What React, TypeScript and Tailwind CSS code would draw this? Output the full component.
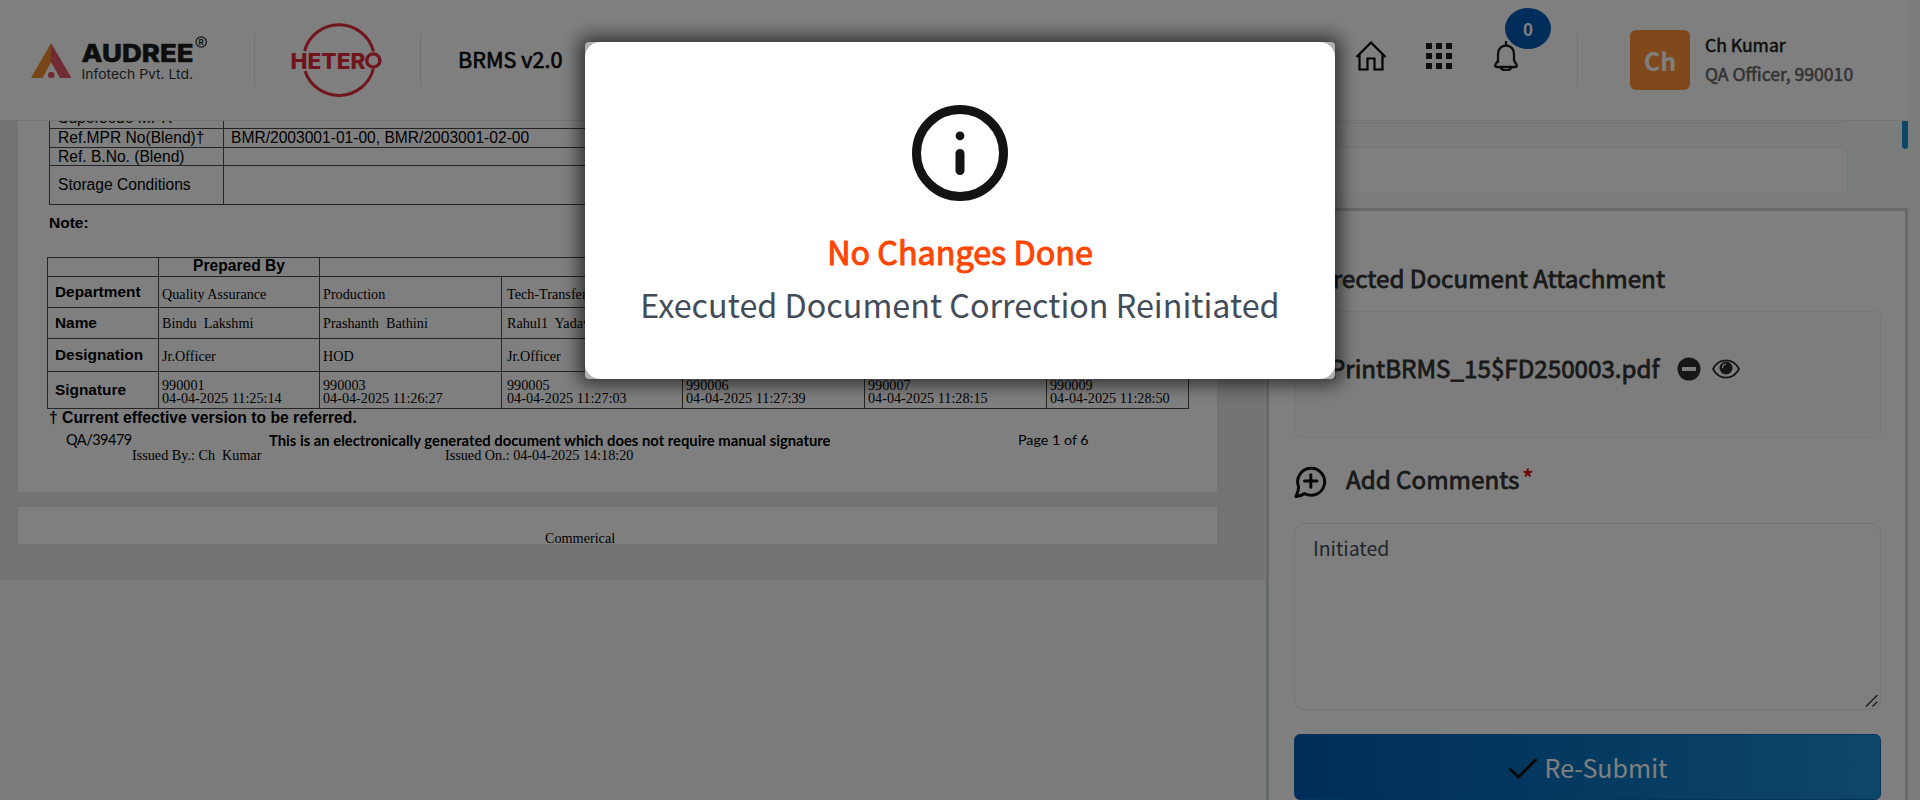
import type { ReactNode } from "react";

const signers = [
  { dept: "Quality Assurance", name: "Bindu\u00a0 Lakshmi", role: "Jr.Officer", id: "990001", at: "04-04-2025 11:25:14" },
  { dept: "Production", name: "Prashanth\u00a0 Bathini", role: "HOD", id: "990003", at: "04-04-2025 11:26:27" },
  { dept: "Tech-Transfer", name: "Rahul1\u00a0 Yadav", role: "Jr.Officer", id: "990005", at: "04-04-2025 11:27:03" },
  { dept: "", name: "", role: "", id: "990006", at: "04-04-2025 11:27:39" },
  { dept: "", name: "", role: "", id: "990007", at: "04-04-2025 11:28:15" },
  { dept: "", name: "", role: "", id: "990009", at: "04-04-2025 11:28:50" },
];

function AudreeLogo() {
  return (
    <svg width="180" height="50" viewBox="0 0 180 50" className="block">
      <path d="M21 7V26.500L12.500 42H1z" fill="#f08c2d" />
      <path d="M21 7L41.500 42H30L21 26z" fill="#e2566a" />
      <rect x="18" y="36" width="6.500" height="6" rx="2.500" fill="#e2566a" />
      <text x="51.500" y="26" textLength="112" lengthAdjust="spacingAndGlyphs" fontFamily="Inter" fontWeight="800" fontSize="24.500" fill="#1d1d1d" stroke="#1d1d1d" strokeWidth="0.500">AUDREE</text>
      <text x="51.500" y="42.500" textLength="111.500" lengthAdjust="spacingAndGlyphs" fontFamily="Inter" fontSize="13.500" fill="#333">Infotech Pvt. Ltd.</text>
      <circle cx="171.200" cy="6" r="5.200" fill="none" stroke="#222" strokeWidth="1.200" />
      <text x="171.200" y="9" textAnchor="middle" fontFamily="Inter" fontWeight="700" fontSize="8" fill="#222">R</text>
    </svg>
  );
}

function HeteroLogo() {
  return (
    <svg width="92" height="80" viewBox="0 0 92 80" className="block">
      <path d="M13.500 31A35.700 35.700 0 0 1 82.500 31.500M82.500 48.500A35.700 35.700 0 0 1 14 51" fill="none" stroke="#e02a3a" strokeWidth="3" />
      <text x="-0.500" y="48.500" textLength="75" lengthAdjust="spacingAndGlyphs" fontFamily="Inter" fontWeight="800" fontSize="21.500" fill="#e02a3a">HETER</text>
      <circle cx="82.300" cy="40.500" r="6.600" fill="none" stroke="#e02a3a" strokeWidth="3.400" />
    </svg>
  );
}

function Divider() {
  return <div className="h-[52px] w-px bg-[#e3e6e5]" />;
}

function Header() {
  return (
    <header className="flex h-[121px] w-[1908px] items-center border-b border-[#e4e7e6] bg-white">
      <div className="ml-[30px] mt-[1px] flex w-[224px]">
        <AudreeLogo />
      </div>
      <Divider />
      <div className="ml-[36px] flex w-[129px]">
        <HeteroLogo />
      </div>
      <Divider />
      <div className="-mt-[3px] ml-[37px] text-[21.6px] leading-8 text-[#0c0c0c] [-webkit-text-stroke:0.7px]">BRMS v2.0</div>
      <div className="ml-auto flex items-center">
        <svg width="32" height="32" viewBox="0 0 32 32" fill="none" stroke="#000" strokeWidth="2.200" className="-mt-[8px]">
          <path d="M1.500 17L16 2.500L30.500 17M4.500 14.500V29.500H12.500V18.500H19.500V29.500H27.500V14.500" />
        </svg>
        <svg width="26" height="26" viewBox="0 0 26 26" fill="#1c1c1c" className="ml-[39px] -mt-[8px]">
          <path d="M0 0h6v6H0zM10 0h6v6h-6zM20 0h6v6h-6zM0 10h6v6H0zM10 10h6v6h-6zM20 10h6v6h-6zM0 20h6v6H0zM10 20h6v6h-6zM20 20h6v6h-6z" />
        </svg>
        <div className="relative ml-[42px] -mt-[8px]">
          <svg width="24" height="30" viewBox="0 0 24 30" fill="none" stroke="#1c1c1c" strokeWidth="2.300" strokeLinejoin="round">
            <path d="M12 0V4M4 22V13C4 8 7.500 4.500 12 4.500S20 8 20 13V19C20 21 22.800 22.500 22.800 24.500C22.800 25.800 22 26 21 26H3C2 26 1.200 25.800 1.200 24.500C1.200 22.500 4 21 4 19" />
            <path d="M6.500 26.500C8.500 30.500 15.500 30.500 17.500 26.500" />
          </svg>
          <div className="absolute -top-[33px] left-[11px] flex h-[41px] w-[46px] items-center justify-center rounded-[50%] bg-[#005bb4] pb-px text-[17px] font-bold leading-none text-white">0</div>
        </div>
      </div>
      <div className="ml-[59px]">
        <Divider />
      </div>
      <div className="ml-[52px] flex size-[60px] items-center justify-center rounded-md bg-[#fe9236] text-[25px] font-bold leading-none text-white">Ch</div>
      <div className="-mt-[3px] ml-[15px] w-[203px] text-[17.6px] leading-[29px] whitespace-nowrap [-webkit-text-stroke:0.55px]">
        <div className="text-[#1c1c1c]">Ch Kumar</div>
        <div className="text-[#666]">QA Officer, 990010</div>
      </div>
    </header>
  );
}

function SpecRow({ label, value = "", size }: { label: string; value?: string; size: string }) {
  return (
    <div className={`flex border-b border-[#4a4a4a] ${size}`}>
      <div className="flex w-[175px] items-center border-x border-[#4a4a4a] pl-2">{label}</div>
      <div className="flex items-center pl-[7px]">{value}</div>
    </div>
  );
}

const signGrid = "grid grid-cols-[111px_161px_182px_181px_182px_182px_142px] border-b border-[#4a4a4a]";

function SignRow({ label, size, pad = "", cells }: { label: string; size: string; pad?: string; cells: ReactNode[] }) {
  return (
    <div className={`${signGrid} ${size}`}>
      <div className="flex items-center border-r border-[#4a4a4a] pb-px pl-[7px] font-['Liberation_Sans',sans-serif] text-[15.4px] font-bold">{label}</div>
      {cells.map((c, i) => (
        <div key={i} className={`flex items-center border-r border-[#4a4a4a] ${i === 2 ? "pl-[5px]" : "pl-[3px]"} ${pad}`}>{c}</div>
      ))}
    </div>
  );
}

function DocumentViewer() {
  return (
    <div className="h-[459px] overflow-hidden bg-[#e7e7e7] pl-[18px] whitespace-nowrap text-black">
      <div className="flow-root h-[371px] w-[1199px] overflow-hidden bg-white">
        <div className="-mt-[13px] ml-[31px] w-[1140px] font-['Liberation_Sans',sans-serif] text-[15.6px] leading-4">
          <SpecRow label="Supersede MPR" size="h-[21px]" />
          <SpecRow label="Ref.MPR No(Blend)†" value="BMR/2003001-01-00, BMR/2003001-02-00" size="h-[19px]" />
          <SpecRow label="Ref. B.No. (Blend)" size="h-[18px]" />
          <SpecRow label="Storage Conditions" size="h-[39px]" />
        </div>
        <div className="mt-[8px] ml-[31px] font-['Liberation_Sans',sans-serif] text-[15.5px] font-bold leading-5">Note:</div>
        <div className="mt-[24px] ml-[29px] w-[1142px] border-l border-t border-[#4a4a4a] font-['Liberation_Serif',serif] text-[14.2px] leading-[13px]">
          <div className={`${signGrid} h-[19px] font-['Liberation_Sans',sans-serif] text-[15.6px] font-bold`}>
            <div className="border-r border-[#4a4a4a]" />
            <div className="flex items-center justify-center border-r border-[#4a4a4a] pb-[3px]">Prepared By</div>
            <div className="col-span-5 border-r border-[#4a4a4a]" />
          </div>
          <SignRow label="Department" size="h-[31px]" pad="pt-[4px]" cells={signers.map((s) => s.dept)} />
          <SignRow label="Name" size="h-[31px]" cells={signers.map((s) => s.name)} />
          <SignRow label="Designation" size="h-[33px]" pad="pt-[2px]" cells={signers.map((s) => s.role)} />
          <SignRow
            label="Signature"
            size="h-[37px]"
            pad="pt-[4px]"
            cells={signers.map((s) => (
              <div>
                {s.id}
                <br />
                {s.at}
              </div>
            ))}
          />
        </div>
        <div className="-mt-px ml-[31px] font-['Liberation_Sans',sans-serif] text-[15.7px] font-bold leading-5">† Current effective version to be referred.</div>
        <div className="mt-[2px] flex pl-[48px] font-['Lato',sans-serif] text-[14.5px] leading-5">
          <div className="w-[203px] tracking-[-0.5px]">QA/39479</div>
          <div className="w-[749px] text-[14.8px] font-bold">This is an electronically generated document which does not require manual signature</div>
          <div className="text-[14.3px]">Page 1 of 6</div>
        </div>
        <div className="-mt-[2px] flex pl-[114px] font-['Liberation_Serif',serif] text-[14.2px] leading-[14px]">
          <div className="w-[313px]">Issued By.: Ch&nbsp; Kumar</div>
          <div>Issued On.: 04-04-2025 14:18:20</div>
        </div>
      </div>
      <div className="mt-[15px] flex h-[37px] w-[1199px] items-end bg-white pl-[527px] font-['Liberation_Serif',serif] text-[14.2px] leading-3">Commerical</div>
    </div>
  );
}

function CorrectionPanel() {
  return (
    <section className="h-[640px] border-[3px] border-[#cfd2d1] bg-white pr-[24px] pl-[25px] text-[#333]">
      <div className="mt-[51px] flex h-[32px] items-center justify-end pr-[216px] text-[24.2px] whitespace-nowrap [-webkit-text-stroke:0.8px]">
        <span>Corrected Document Attachment</span>
      </div>
      <div className="mt-[17px] flex h-[127px] items-center rounded-md border border-[#f0f0f0] bg-[#fbfbfb] pl-[35px]">
        <span className="-mt-[13px] w-[347px] text-[24.2px] leading-8 whitespace-nowrap [-webkit-text-stroke:0.8px]">PrintBRMS_15$FD250003.pdf</span>
        <svg width="24" height="24" viewBox="0 0 24 24" className="-mt-[12px]">
          <circle cx="12" cy="12" r="11.500" fill="#2c2c2c" />
          <rect x="5" y="10" width="14" height="4" rx="0.500" fill="#fbfbfb" />
        </svg>
        <svg width="28" height="20" viewBox="0 0 28 20" fill="none" stroke="#2c2c2c" strokeWidth="1.800" className="ml-[11px] -mt-[11px]">
          <path d="M1 10C7-1.500 21-1.500 27 10C21 21.500 7 21.500 1 10Z" />
          <circle cx="14" cy="9" r="6.500" fill="#2c2c2c" stroke="none" />
          <path d="M10.500 9C10.500 6.500 12 5 14 5" stroke="#fbfbfb" strokeWidth="1.200" />
        </svg>
      </div>
      <div className="mt-[22px] flex h-[42px] items-center">
        <svg width="33" height="33" viewBox="0 0 33 33" fill="none" stroke="#111" strokeWidth="3" strokeLinecap="round" strokeLinejoin="round" className="mt-[1px]">
          <path d="M10.500 28.500A13.500 13.500 0 1 0 4.500 21.500C5 25 3 28.500 2 31.500C5 31 8 30.500 10.500 28.500ZM10.500 16H23M16.800 9.800V22.200" />
        </svg>
        <span className="-mt-[5px] ml-[19px] text-[24.2px] leading-8 [-webkit-text-stroke:0.8px]">Add Comments</span>
        <span className="-mt-[10px] ml-[3px] text-[22px] font-bold leading-8 text-[#e60000]">*</span>
      </div>
      <div className="relative mt-[21px] h-[187px] rounded-[10px] border border-[#e8e8e8] bg-white pt-[8px] pl-[18px] text-[19.5px] leading-8 text-[#434b58]">
        Initiated
        <svg width="14" height="14" viewBox="0 0 14 14" stroke="#333" strokeWidth="1.300" className="absolute right-[1px] bottom-[1px]">
          <path d="M1 12.500L12.500 1M7.500 12.500L12.500 7.500" />
        </svg>
      </div>
      <button className="mt-[24px] flex h-[66px] w-full items-center justify-center rounded-md border border-[#1068b8] bg-linear-to-r from-[#005bb4] to-[#1b8ecf] text-[25px] leading-8 text-white">
        <svg width="30" height="22" viewBox="0 0 30 22" fill="none" stroke="#111" strokeWidth="3" strokeLinecap="round" className="mr-[7px] mt-[4px]">
          <path d="M2.500 11.500L10.500 19L27.500 2" />
        </svg>
        Re-Submit
      </button>
    </section>
  );
}

function NoticeDialog() {
  return (
    <div className="fixed inset-0 flex items-start justify-center bg-black/50 pt-[42px]">
      <div className="rounded-[4px] bg-[#b0b0b0] shadow-[0_0_18px_6px_rgba(0,0,0,0.6)]">
        <div className="flex h-[337px] w-[750px] flex-col items-center rounded-[15px] bg-white whitespace-nowrap">
          <svg width="96" height="96" viewBox="0 0 96 96" className="mt-[63px]" fill="none" stroke="#131313" strokeWidth="9" strokeLinecap="round">
            <circle cx="48" cy="48" r="43.500" />
            <path d="M48 48.500V65.500" />
            <circle cx="48" cy="30.800" r="4.400" fill="#131313" stroke="none" />
          </svg>
          <div className="mt-[30px] text-[32.3px] leading-[40px] text-[#ff4500] [-webkit-text-stroke:1px]">No Changes Done</div>
          <div className="mt-[13px] text-[32.3px] leading-[40px] text-[#434b58]">Executed Document Correction Reinitiated</div>
        </div>
      </div>
    </div>
  );
}

export default function App() {
  return (
    <div className="h-[800px] w-[1920px] overflow-hidden bg-[#f7fbf9] font-['Noto_Sans_CJK_SC',sans-serif]">
      <Header />
      <main className="relative flex h-[679px] w-[1908px] overflow-hidden">
        <div className="w-[1265px]">
          <DocumentViewer />
        </div>
        <div className="ml-px w-[642px]">
          <div className="h-[2px] w-[579px] rounded-br border-b border-[#e8ecea] bg-white" />
          <div className="mt-[24px] mb-[15px] h-[46px] w-[582px] rounded-tr-md border-t border-r border-[#e8ecea] bg-white" />
          <CorrectionPanel />
        </div>
        <div className="absolute top-0 right-0 h-[28px] w-[6px] rounded-b bg-[#1b8ecf]" />
      </main>
      <NoticeDialog />
    </div>
  );
}
